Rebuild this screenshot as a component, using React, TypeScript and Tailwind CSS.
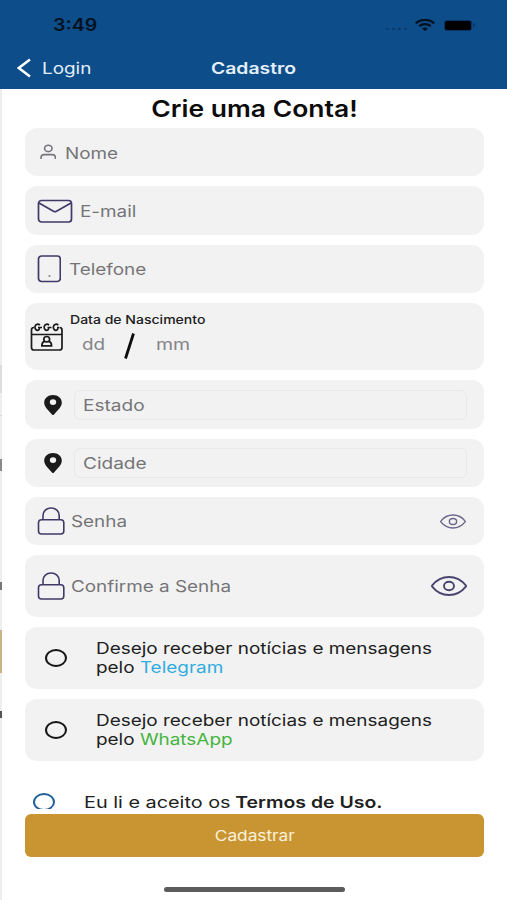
import type { ReactNode } from "react";

function MailIcon() {
  return (
    <svg className="mb-px h-6 w-9" viewBox="0 0 36 24" fill="none" stroke="#403a68" strokeWidth={1.7}>
      <rect x="1.5" y="1.5" width="33" height="21.5" rx="3" />
      <path d="M2 4L16.500 12.300q1.500.8 3 0L34 4" />
    </svg>
  );
}

function UserIcon() {
  return (
    <svg className="mb-px h-4 w-4" viewBox="0 0 16 16" fill="none" stroke="#77757a" strokeWidth={1.6}>
      <ellipse cx="8.300" cy="4.400" rx="3.700" ry="3.200" />
      <path d="M1 15V13.800C1 11.800 2.500 10.600 4.500 10.600H12C14 10.600 15.400 11.800 15.400 13.800V15" />
    </svg>
  );
}

function PhoneIcon() {
  return (
    <svg className="h-7 w-6" viewBox="0 0 24 28" fill="none" stroke="#403a68" strokeWidth={1.7}>
      <rect x="1.500" y="1" width="21.800" height="25.500" rx="3" />
      <circle cx="12.500" cy="21" r="1.100" fill="#88868c" stroke="none" />
    </svg>
  );
}

function CalendarIcon() {
  return (
    <svg className="h-7 w-[33px]" viewBox="0 0 33 28" fill="none" stroke="#1b1b1b" strokeWidth={1.7}>
      <path d="M4 4.500Q1.500 4.300 1.500 7v17.500Q1.500 27 4 27h25.500q2.500 0 2.500-2.500V7q0-2.500-2.500-2.500M1.500 11.500h30.500" />
      <path d="M8 4.500h4M17.500 4.500h4M27 4.500h2" />
      <path d="M9.800 2.200C8.500.6 5.300.9 5 3.700c-.2 2.300 1.200 3.700 2.700 3.600 1.300-.1 1.800-1.200 1.600-2.300" />
      <path d="M19 2.200c-1.300-1.600-4.500-1.300-4.800 1.500-.2 2.300 1.200 3.700 2.700 3.600 1.300-.1 1.800-1.200 1.600-2.300" />
      <path d="M28.200 2.200c-1.300-1.600-4.500-1.300-4.800 1.500-.2 2.300 1.200 3.700 2.700 3.600 1.300-.1 1.800-1.200 1.600-2.300" />
      <ellipse cx="16.700" cy="16.200" rx="2.900" ry="2.700" />
      <path d="M14.400 18.400c-1.800.6-2.600 1.800-2.600 4.500h9.800c0-2.700-.8-3.900-2.600-4.500" />
    </svg>
  );
}

function PinIcon() {
  return (
    <svg className="h-5 w-[18px]" viewBox="0 0 18 20">
      <path
        fill="#1b1b1b"
        fillRule="evenodd"
        d="M9 0C4 0 .2 3.300.2 7.600c0 4.500 4.300 8 7.800 11.800q1 1 2 0c3.500-3.800 7.800-7.300 7.800-11.800C17.800 3.300 14 0 9 0zm0 4.200a3.200 2.900 0 110 5.800 3.200 2.900 0 010-5.800z"
      />
    </svg>
  );
}

function LockIcon() {
  return (
    <svg className="h-7 w-7" viewBox="0 0 28 28" fill="none" stroke="#403a68" strokeWidth={1.6}>
      <rect x="1.500" y="12.700" width="25.300" height="14.300" rx="3" />
      <path d="M6 12.700V8.500C6 4 9.500 1 14.100 1s8.100 3 8.100 7.500v4.200" />
    </svg>
  );
}

function EyeIcon({ className }: { className: string }) {
  return (
    <svg className={className} viewBox="0 0 36 20" fill="none" stroke="currentColor" strokeWidth={1.9}>
      <path d="M1.200 10.600q-.5-.6 0-1.200C5.500 4 11 1 18 1s12.500 3 16.800 8.400q.5.6 0 1.200C30.500 16 25 19 18 19S5.500 16 1.200 10.600z" />
      <ellipse cx="18" cy="10" rx="5" ry="4.200" />
    </svg>
  );
}

function Field({
  icon,
  label,
  className,
  labelClass,
  children,
}: {
  icon: ReactNode;
  label: string;
  className: string;
  labelClass: string;
  children?: ReactNode;
}) {
  return (
    <label className={`flex shrink-0 items-center rounded-xl bg-[#f2f2f2] ${className}`}>
      {icon}
      <span className={`origin-left scale-x-[1.18] text-base whitespace-nowrap text-[#757578] ${labelClass}`}>
        {label}
      </span>
      {children}
    </label>
  );
}

function SelectField({ label }: { label: string }) {
  return (
    <div className="flex h-[48.3px] shrink-0 items-center rounded-xl bg-[#f2f2f2] pr-[17px] pl-[19px]">
      <PinIcon />
      <div className="ml-3 flex h-[30px] flex-1 items-center rounded-md border border-[#e8e8e8] pl-2">
        <span className="origin-left scale-x-[1.19] text-base text-[#757578]">{label}</span>
      </div>
    </div>
  );
}

function NewsOption({ channel, color }: { channel: string; color: string }) {
  return (
    <label className="flex h-[61.7px] shrink-0 items-center rounded-xl bg-[#f2f2f2] pl-5">
      <span className="h-[18px] w-[22px] shrink-0 rounded-[50%] border-2 border-[#151515]" />
      <span className="ml-[29px] origin-left scale-x-[1.183] text-base leading-[19px] whitespace-nowrap text-[#202020]">
        Desejo receber notícias e mensagens
        <br />
        pelo <span className={color}>{channel}</span>
      </span>
    </label>
  );
}

function Header() {
  return (
    <header className="flex h-[89px] shrink-0 flex-col bg-[#0c4d8a]">
      <div className="flex h-12 items-center justify-between pt-[2px] pr-[32px] pl-[53px] text-[#06111f]">
        <span className="origin-left scale-x-[1.15] pt-px text-[17px] font-semibold">3:49</span>
        <div className="flex items-center">
          <div className="mt-2 flex gap-[3px]">
            {[0, 1, 2, 3].map((i) => (
              <span key={i} className="h-[2px] w-[3px] rounded-full bg-[#093a6b]" />
            ))}
          </div>
          <svg className="ml-[8px] h-3 w-5" viewBox="0 0 20 12" fill="none" stroke="#03101e" strokeWidth={2.3}>
            <path d="M.8 4.300C6-.3 14-.3 19.200 4.300M4.200 7.200c3.300-2.800 8.300-2.800 11.600 0" />
            <path d="M7 9.400q3-2 6 0L10 12z" fill="#03101e" stroke="none" />
          </svg>
          <div className="ml-[9px] h-[11px] w-7 rounded-[3px] border border-[#083565] bg-black" />
          <span className="ml-px h-1 w-[2px] rounded-r bg-[#083565]" />
        </div>
      </div>
      <div className="grid h-[41px] grid-cols-3 items-center pb-[2px] text-[16px] text-white">
        <div className="flex items-center pl-[17px] text-[#e4effa]">
          <svg className="h-5 w-[14px]" viewBox="0 0 14 20" fill="none" stroke="#fff" strokeWidth={2.5}>
            <path d="M13 1.500L1.800 10 13 18.500" />
          </svg>
          <span className="ml-[11px] origin-left scale-x-[1.18]">Login</span>
        </div>
        <h1 className="scale-x-[1.21] text-center font-semibold text-[#e4effa]">Cadastro</h1>
      </div>
    </header>
  );
}

// Sliver of the previous screen, still visible at the left edge
function PreviousScreen() {
  return (
    <div className="flex w-[2px] shrink-0 flex-col bg-[#eeeeee]">
      <div className="mt-[276px] h-7 bg-[#dddddd]" />
      <div className="mt-[22px] h-px bg-[#d5d5d5]" />
      <div className="mt-[43px] h-3 bg-[#8a8a8a]" />
      <div className="mt-[111px] h-2 bg-[#777777]" />
      <div className="mt-[40px] h-[43px] bg-[#cbb184]" />
      <div className="mt-[38px] h-[7px] bg-[#555555]" />
    </div>
  );
}

export default function App() {
  return (
    <div className="flex h-[900px] w-[507px] flex-col overflow-hidden bg-white font-['Inter',sans-serif]">
      <Header />
      <div className="flex min-h-0 flex-1">
        <PreviousScreen />
        <main className="flex min-w-0 flex-1 flex-col pr-[23px] pl-[23px]">
          <h2 className="h-[39px] scale-x-[1.15] pt-px text-center text-[23px] leading-[39px] font-semibold text-[#0c0c0c]">
            Crie uma Conta!
          </h2>

          <div className="flex h-[686px] flex-col gap-[10.1px]">
            <Field icon={<UserIcon />} label="Nome" labelClass="ml-[9px]" className="h-[48.3px] pt-px pl-[15px]" />
            <Field icon={<MailIcon />} label="E-mail" labelClass="ml-[7px]" className="h-[48.3px] pt-px pl-[12px]" />
            <Field icon={<PhoneIcon />} label="Telefone" labelClass="ml-[8px]" className="h-[48.3px] pl-[12px]" />

            <div className="flex h-[67.2px] shrink-0 items-center rounded-xl bg-[#f2f2f2] pl-[5px]">
              <CalendarIcon />
              <div className="ml-[7px] flex h-full flex-col pt-[9px]">
                <span className="origin-left scale-x-[1.17] text-xs leading-4 font-medium text-[#202020]">
                  Data de Nascimento
                </span>
                <div className="flex items-start text-base text-[#858588]">
                  <span className="mt-[4px] ml-[12px] w-[42px] origin-left scale-x-[1.18]">dd</span>
                  <svg className="mt-[5px] h-[26px] w-[11px]" viewBox="0 0 11 26" stroke="#0c0c0c" strokeWidth={2.8}>
                    <path d="M9.500.5L1.500 25.500" />
                  </svg>
                  <span className="mt-[4px] ml-[21px] origin-left scale-x-[1.22]">mm</span>
                </div>
              </div>
            </div>

            <SelectField label="Estado" />
            <SelectField label="Cidade" />

            <Field icon={<LockIcon />} label="Senha" labelClass="ml-[6px]" className="h-[48px] pr-[18px] pl-[12px]">
              <EyeIcon className="ml-auto h-[15px] w-[26px] text-[#69658b]" />
            </Field>
            <Field
              icon={<LockIcon />}
              label="Confirme a Senha"
              labelClass="ml-[6px]"
              className="h-[61.7px] pr-[17px] pl-[12px]"
            >
              <EyeIcon className="ml-auto h-5 w-9 text-[#49446e]" />
            </Field>

            <NewsOption channel="Telegram" color="text-[#30acdf]" />
            <NewsOption channel="WhatsApp" color="text-[#45b43e]" />

            <label className="mt-[20px] flex shrink-0 items-start pl-2">
              <span className="mt-[2px] h-[16px] w-[22px] shrink-0 overflow-hidden">
                <span className="block h-[18px] w-[22px] rounded-[50%] border-2 border-[#225f9d]" />
              </span>
              <span className="mt-px ml-[29px] flex origin-left scale-x-[1.24] gap-[4px] text-base leading-5 whitespace-nowrap text-[#202020]">
                <span>Eu li e aceito os</span>
                <b className="origin-left scale-x-[0.98] font-semibold">Termos de Uso.</b>
              </span>
            </label>
          </div>

          <button
            type="button"
            className="h-[43px] shrink-0 rounded-md bg-[#c99532] pt-[2px] text-[15px] text-[#fbf0da]"
          >
            <span className="inline-block scale-x-[1.15]">Cadastrar</span>
          </button>
          <div className="mt-[30px] h-[5px] w-[181px] self-center rounded-full bg-[#5c5c5c]" />
        </main>
      </div>
    </div>
  );
}
